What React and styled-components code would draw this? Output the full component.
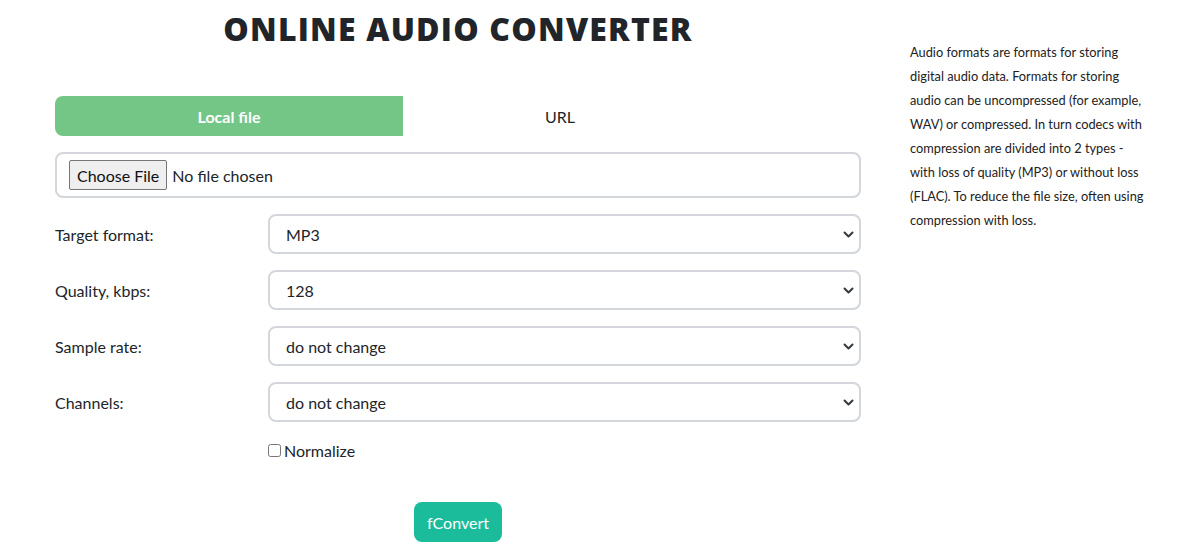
import React from 'react';
import styled, { createGlobalStyle } from 'styled-components';

const GlobalStyle = createGlobalStyle`
  body {
    margin: 0;
    font-family: Lato, "Open Sans", sans-serif;
    color: #212529;
    background: #fff;
  }
  * { box-sizing: border-box; }
`;

const Page = styled.div`
  display: flex;
  align-items: flex-start;
  gap: 49px;
  padding: 0 0 0 55px;
`;

const Main = styled.main`
  width: 806px;
  display: flex;
  flex-direction: column;
`;

const Title = styled.h1`
  margin: 10px 0 0;
  text-align: center;
  font-family: "Open Sans", sans-serif;
  font-weight: 800;
  font-size: 32px;
  letter-spacing: 1.2px;
  line-height: 38px;
  color: #212529;
`;

const Tabs = styled.div`
  display: grid;
  grid-template-columns: 348px 314px;
  margin-top: 48px;
`;

const Tab = styled.button`
  height: 40px;
  border: none;
  border-radius: ${p => (p.$active ? '8px 0 0 8px' : '0')};
  background: ${p => (p.$active ? '#74c686' : 'transparent')};
  color: ${p => (p.$active ? '#fff' : '#212529')};
  font-family: Lato, sans-serif;
  font-size: 16px;
  font-weight: ${p => (p.$active ? 700 : 400)};
  cursor: pointer;
`;

const FileBox = styled.div`
  margin-top: 16px;
  height: 46px;
  border: 2px solid #d3d6db;
  border-radius: 8px;
  display: flex;
  align-items: center;
  padding: 0 12px;

  input {
    font-family: Lato, sans-serif;
    font-size: 16px;
    color: #212529;
  }
  input::file-selector-button {
    font-family: Lato, sans-serif;
    font-size: 16px;
    height: 30px;
    padding: 0 7px;
    margin-right: 5px;
    border: 1px solid #767676;
    border-radius: 2px;
    background: #efefef;
    color: #111;
  }
`;

const Form = styled.div`
  display: flex;
  flex-direction: column;
  gap: 16px;
  margin-top: 16px;
`;

const Row = styled.label`
  display: grid;
  grid-template-columns: 213px 1fr;
  align-items: center;
  font-size: 16px;
`;

const SelectWrap = styled.div`
  position: relative;
  height: 40px;
`;

const Select = styled.select`
  width: 100%;
  height: 40px;
  appearance: none;
  border: 2px solid #d3d6db;
  border-radius: 8px;
  background: #fff;
  padding: 0 16px;
  font-family: Lato, sans-serif;
  font-size: 16px;
  color: #212529;
  outline: none;
`;

const Chevron = styled.svg`
  position: absolute;
  right: 7px;
  top: 17px;
  pointer-events: none;
`;

const CheckRow = styled.label`
  display: flex;
  align-items: center;
  gap: 3px;
  margin: 19px 0 0 213px;
  font-size: 16px;

  input {
    margin: 0;
    width: 13px;
    height: 13px;
  }
`;

const Actions = styled.div`
  display: flex;
  justify-content: center;
  margin-top: 42px;
`;

const ConvertButton = styled.button`
  height: 40px;
  padding: 0 13px;
  border: none;
  border-radius: 8px;
  background: #1abc9c;
  color: #fff;
  font-family: Lato, sans-serif;
  font-size: 16px;
  cursor: pointer;
`;

const Aside = styled.aside`
  width: 240px;
  margin-top: 40px;
  font-size: 12.8px;
  line-height: 24px;
  color: #222;
`;

const fields = [
  { label: 'Target format:', options: ['MP3', 'WAV', 'FLAC', 'OGG', 'M4A'] },
  { label: 'Quality, kbps:', options: ['128', '64', '192', '256', '320'] },
  { label: 'Sample rate:', options: ['do not change', '44100', '48000'] },
  { label: 'Channels:', options: ['do not change', 'mono', 'stereo'] },
];

const Field = ({ label, options }) => (
  <Row>
    <span>{label}</span>
    <SelectWrap>
      <Select defaultValue={options[0]}>
        {options.map(o => <option key={o}>{o}</option>)}
      </Select>
      <Chevron width="11" height="7" viewBox="0 0 11 7">
        <path d="M1.5 1.5 L5.5 5.5 L9.5 1.5" fill="none" stroke="#343a40" strokeWidth="2" strokeLinecap="round" strokeLinejoin="round" />
      </Chevron>
    </SelectWrap>
  </Row>
);

export default function App() {
  return (
    <>
      <GlobalStyle />
      <Page>
        <Main>
          <Title>ONLINE AUDIO CONVERTER</Title>
          <Tabs>
            <Tab $active>Local file</Tab>
            <Tab>URL</Tab>
          </Tabs>
          <FileBox>
            <input type="file" />
          </FileBox>
          <Form>
            {fields.map(f => <Field key={f.label} {...f} />)}
          </Form>
          <CheckRow>
            <input type="checkbox" />
            Normalize
          </CheckRow>
          <Actions>
            <ConvertButton>fConvert</ConvertButton>
          </Actions>
        </Main>
        <Aside>
          Audio formats are formats for storing digital audio data. Formats for storing audio can be
          uncompressed (for example, WAV) or compressed. In turn codecs with compression are divided
          into 2 types - with loss of quality (MP3) or without loss (FLAC). To reduce the file size,
          often using compression with loss.
        </Aside>
      </Page>
    </>
  );
}
